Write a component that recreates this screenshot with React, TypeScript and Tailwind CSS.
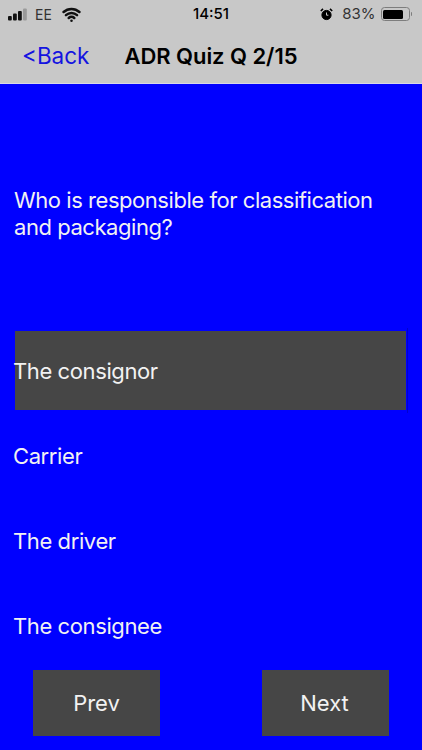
import { Wifi } from 'lucide-react';

const options = ['The consignor', 'Carrier', 'The driver', 'The consignee'];

function Signal() {
  return (
    <svg width="21" height="13" viewBox="0 0 21 13" fill="currentColor">
      <rect x="0" y="8" width="3.8" height="4.5" rx="1" />
      <rect x="5" y="5.5" width="3.8" height="7" rx="1" />
      <rect x="10" y="3" width="3.8" height="9.5" rx="1" />
      <rect x="15" y="0.5" width="3.8" height="12" rx="1" fill="#9a9a9a" />
    </svg>
  );
}

function Alarm() {
  return (
    <svg width="13" height="13" viewBox="0 0 13 13" fill="none" stroke="currentColor">
      <circle cx="6.5" cy="7" r="4.6" fill="currentColor" />
      <path d="M6.5 4.5V7.2H8.4" stroke="#c8c8c8" strokeWidth="1" />
      <path d="M0.8 3 L3 0.9 M12.2 3 L10 0.9" strokeWidth="1.6" />
    </svg>
  );
}

function Battery() {
  return (
    <div className="ml-[5px] flex items-center gap-[1px]">
      <div className="h-[14px] w-[29px] rounded-[3.5px] border border-[#7d7d7d] p-[1.5px]">
        <div className="h-full w-[85%] rounded-[1.5px] bg-black" />
      </div>
      <div className="h-[4px] w-[1.5px] rounded-r-sm bg-[#7d7d7d]" />
    </div>
  );
}

export default function App() {
  return (
    <div className="flex h-[750px] w-[422px] flex-col overflow-hidden bg-[#0000ff] font-['Inter',sans-serif] text-white">
      {/* Header */}
      <div className="h-[84px] shrink-0 border-b border-[#d8d8e8] bg-[#c8c8c8] text-black">
        <div className="relative flex h-[28px] items-center justify-between pl-[8px] pr-[10px]">
          <div className="flex items-center text-[#111]">
            <Signal />
            <span className="ml-[6px] text-[14px] text-[#333]">EE</span>
            <Wifi size={19} strokeWidth={3.2} className="ml-[10px]" />
          </div>
          <span className="absolute left-0 right-0 text-center text-[15px] font-medium">14:51</span>
          <div className="flex items-center">
            <Alarm />
            <span className="ml-[9px] text-[15px] text-[#333]">83%</span>
            <Battery />
          </div>
        </div>
        <div className="flex h-[55px] items-center">
          <span className="ml-[22px] mt-[1px] text-[22.5px] leading-none text-[#1414e0]">&lt;Back</span>
          <span className="ml-[35px] mt-[1px] text-[22px] leading-none font-semibold tracking-[-0.05px]">ADR Quiz Q 2/15</span>
        </div>
      </div>

      {/* Question */}
      <div className="mt-[103px] h-[144px] shrink-0 px-[14px] text-[22px] leading-[27px] tracking-[-0.45px] text-[#f2f2f2]">
        Who is responsible for classification and packaging?
      </div>

      {/* Answers */}
      <div className="flex flex-col gap-[6px]">
        {options.map((o, i) => (
          <div
            key={o}
            className={`relative ml-[15px] flex h-[79px] w-[391px] items-center pt-[2px] text-[22px] tracking-[-0.4px] text-[#f2f2f2] ${
              i === 0 ? 'bg-[#464646]' : ''
            }`}
          >
            <span className="-ml-[2px]">{o}</span>
            {i === 0 && <div className="absolute -right-[2px] -top-[3px] -bottom-[3px] w-px bg-[#0000d0]" />}
          </div>
        ))}
      </div>

      {/* Prev / Next */}
      <div className="mt-[5px] flex justify-between px-[33px]">
        <button className="h-[66px] w-[127px] bg-[#464646] text-[22px] text-[#f2f2f2]">Prev</button>
        <button className="h-[66px] w-[127px] bg-[#464646] pr-[2px] text-[22px] text-[#f2f2f2]">Next</button>
      </div>
    </div>
  );
}
